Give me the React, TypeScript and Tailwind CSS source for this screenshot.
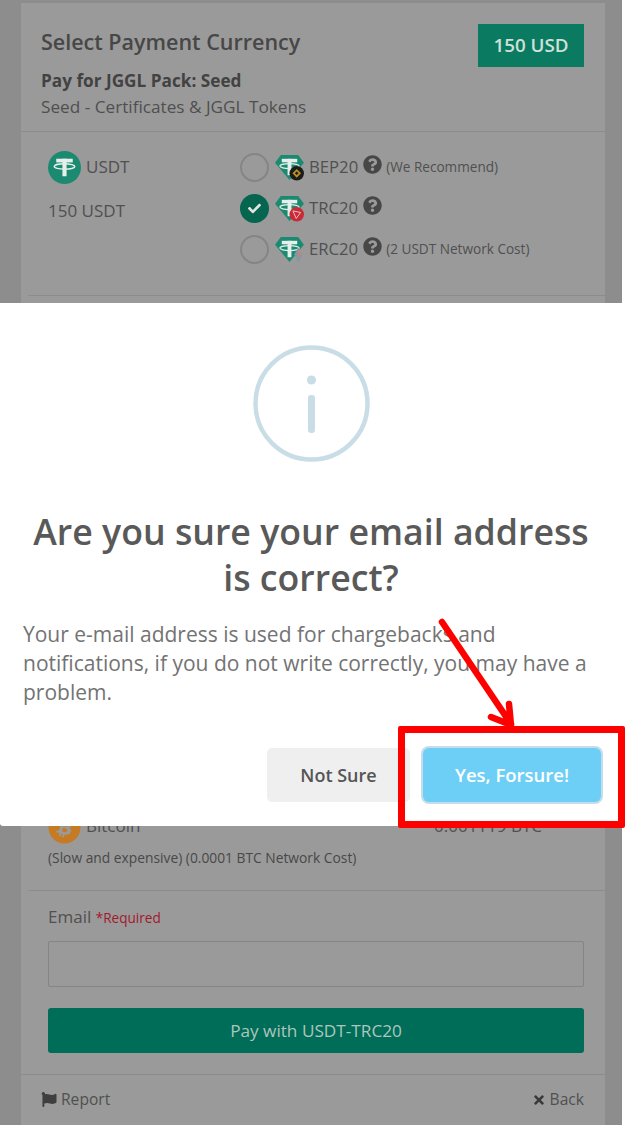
import { FaBitcoin, FaCheck, FaFlag, FaQuestionCircle, FaTimes } from "react-icons/fa";

const font = { fontFamily: '"Open Sans", sans-serif' };

function TetherMark({ color = "#e6efec" }: { color?: string }) {
    return (
        <g fill={color}>
            <rect x="8" y="7.5" width="16" height="3.6" />
            <rect x="14" y="7.5" width="4" height="17" />
            <ellipse cx="16" cy="15" rx="10" ry="2.6" fill="none" stroke={color} strokeWidth="1.3" />
        </g>
    );
}

function TetherCoin() {
    return (
        <svg viewBox="0 0 32 32" className="w-[33px] h-[33px] shrink-0">
            <circle cx="16" cy="16" r="16" fill="#1c8a70" />
            <TetherMark />
        </svg>
    );
}

function NetworkIcon({ network }: { network: "bep" | "trc" | "erc" }) {
    return (
        <svg viewBox="0 0 32 28" className="w-[31px] h-[27px] shrink-0">
            <path d="M7 1h18l6 8-15 18L1 9z" fill="#1c8a70" />
            <g transform="translate(0 -2.5)">
                <TetherMark />
            </g>
            {network === "bep" && (
                <g>
                    <circle cx="23.5" cy="20" r="7.5" fill="#1b1b1b" />
                    <path d="M23.5 15.5l4.5 4.5-4.5 4.5-4.5-4.5zm0 2.6L21.6 20l1.9 1.9 1.9-1.9z" fill="#b98d1f" />
                </g>
            )}
            {network === "trc" && (
                <g>
                    <circle cx="23.5" cy="20" r="7.5" fill="#c92a37" />
                    <path d="M19.5 16.5l8 1.6-4.5 6.2z" fill="none" stroke="#eec4c8" strokeWidth="1" />
                </g>
            )}
            {network === "erc" && (
                <g>
                    <path d="M25 12l4 7-4 8-4-8z" fill="#8d90a8" />
                    <path d="M25 12l4 7-4 2z" fill="#b98b7e" />
                    <path d="M21 19l4 2v6z" fill="#73a596" />
                </g>
            )}
        </svg>
    );
}

function NetworkRow({
    network,
    label,
    note,
    checked,
}: {
    network: "bep" | "trc" | "erc";
    label: string;
    note?: string;
    checked?: boolean;
}) {
    return (
        <div className="flex items-center h-[41px]">
            {checked ? (
                <div className="w-[29px] h-[29px] rounded-full bg-[#05654f] flex items-center justify-center">
                    <FaCheck className="w-[13px] h-[13px] text-[#e4e4e4]" />
                </div>
            ) : (
                <div className="w-[29px] h-[29px] rounded-full border-2 border-[#858585]" />
            )}
            <div className="ml-[5px]">
                <NetworkIcon network={network} />
            </div>
            <span className="ml-[4px] text-[16.7px] text-[#505050] -translate-y-[1px]">{label}</span>
            <FaQuestionCircle className="ml-[5px] w-[19px] h-[19px] text-[#474747] -translate-y-[3px]" />
            {note && <span className="ml-[4px] text-[13.6px] text-[#505050]">{note}</span>}
        </div>
    );
}

function PaymentCard() {
    return (
        <div className="w-[622px] h-[1125px] bg-[#8d8d8d] pt-[3px] pl-[21px]">
            <div className="w-[584px] h-[1122px] bg-[#9a9a9a] text-[#4b4b4b] flex flex-col">
                <div className="h-[129px] border-b border-[#8c8c8c] pl-[20px] pr-[21px] pt-[20px] flex justify-between">
                    <div>
                        <h2 className="text-[21.5px] leading-[38px] font-semibold text-[#474747]">
                            Select Payment Currency
                        </h2>
                        <p className="text-[17.2px] leading-[24px] mt-[8px] font-bold text-[#424242]">
                            Pay for JGGL Pack: Seed
                        </p>
                        <p className="text-[17.2px] leading-[26px] mt-[1px] text-[#4f4f4f]">
                            Seed - Certificates &amp; JGGL Tokens
                        </p>
                    </div>
                    <div className="w-[106px] h-[43px] mt-[1px] bg-[#0a7a60] text-[#cfe0da] text-[18.8px] font-semibold flex items-center justify-center">
                        150 USD
                    </div>
                </div>

                <div className="h-[164px] border-b border-[#8c8c8c] ml-[7px] pl-[20px] pt-[19px] flex">
                    <div className="w-[192px]">
                        <div className="flex items-center gap-[5px]">
                            <TetherCoin />
                            <span className="text-[17px] text-[#505050] -translate-y-[1px]">USDT</span>
                        </div>
                        <div className="text-[17px] mt-[14px] text-[#505050]">150 USDT</div>
                    </div>
                    <div className="-mt-[4px]">
                        <NetworkRow network="bep" label="BEP20" note="(We Recommend)" />
                        <NetworkRow network="trc" label="TRC20" checked />
                        <NetworkRow network="erc" label="ERC20" note="(2 USDT Network Cost)" />
                    </div>
                </div>

                <div className="h-[595px] border-b border-[#8c8c8c] ml-[7px] pl-[20px] pb-[23px] flex flex-col justify-end">
                    <div className="flex items-center justify-between pr-[63px]">
                        <div className="flex items-center gap-[5px]">
                            <FaBitcoin className="w-[33px] h-[33px] text-[#c57a24]" />
                            <span className="text-[17px] text-[#505050] -translate-y-[2px]">Bitcoin</span>
                        </div>
                        <span className="text-[17px] text-[#505050] -translate-y-[2px]">0.001119 BTC</span>
                    </div>
                    <p className="text-[13.8px] leading-[18px] mt-[5px] text-[#484848]">
                        (Slow and expensive) (0.0001 BTC Network Cost)
                    </p>
                </div>

                <div className="h-[184px] border-b border-[#8c8c8c] pl-[27px] pr-[21px] pt-[14px]">
                    <div className="text-[17px] leading-[24px] text-[#505050]">
                        Email <span className="text-[13.6px] text-[#a3182c]">*Required</span>
                    </div>
                    <div className="h-[46px] mt-[11px] border border-[#858585] rounded-[2px]" />
                    <div className="h-[45px] mt-[21px] rounded-[3px] bg-[#006d58] text-[#adc6be] text-[17.2px] flex items-center justify-center">
                        Pay with USDT-TRC20
                    </div>
                </div>

                <div className="flex justify-between items-center pl-[20px] pr-[21px] h-[50px] text-[15.6px] text-[#505050]">
                    <div className="flex items-center gap-[4px]">
                        <FaFlag className="w-[16px] h-[15px] text-[#3f3f3f]" />
                        Report
                    </div>
                    <div className="flex items-center gap-[5px]">
                        <FaTimes className="w-[12px] h-[14px] text-[#3a3a3a]" />
                        Back
                    </div>
                </div>
            </div>
        </div>
    );
}

function ConfirmDialog() {
    return (
        <div className="absolute left-0 top-[303px] w-[622px] h-[523px] bg-white rounded-b-[3px] flex flex-col">
            <svg viewBox="0 0 117 117" className="w-[117px] h-[117px] mt-[42px] mx-auto shrink-0">
                <circle cx="58.5" cy="58.5" r="56" fill="none" stroke="#c9dde6" strokeWidth="4.5" />
                <circle cx="58.5" cy="35" r="4.5" fill="#c9dde6" />
                <rect x="55" y="50" width="7" height="38" rx="3" fill="#c9dde6" />
            </svg>
            <h2 className="mt-[46px] text-center text-[35.7px] leading-[46px] font-semibold text-[#595959] whitespace-nowrap">
                Are you sure your email address
                <br />
                is correct?
            </h2>
            <p className="mt-[20px] ml-[23px] mr-[22px] text-[21px] leading-[29px] text-[#737373]">
                Your e-mail address is used for chargebacks and notifications, if you do not write correctly, you may have
                a problem.
            </p>
            <div className="mt-[41px] flex justify-end gap-[13px] pr-[21px]">
                <button className="w-[143px] h-[54px] rounded-[5px] bg-[#efefef] text-[#555555] text-[18px] font-semibold">
                    Not Sure
                </button>
                <button className="w-[178px] h-[54px] rounded-[6px] bg-[#6dcff6] text-white text-[18.5px] font-semibold ring-[2px] ring-[#c5dcea]">
                    Yes, Forsure!
                </button>
            </div>
        </div>
    );
}

export default function App() {
    return (
        <div className="relative w-[625px] h-[1125px] bg-white overflow-hidden" style={font}>
            <PaymentCard />
            <ConfirmDialog />
            <div className="absolute left-[398px] top-[726px] w-[227px] h-[102px] border-[7px] border-[#ff0000] rounded-[2px]" />
            <svg viewBox="0 0 625 1125" className="absolute inset-0 w-[625px] h-[1125px] pointer-events-none">
                <path
                    d="M442 622L511 724M491 717L511 725L509 704"
                    fill="none"
                    stroke="#ff0000"
                    strokeWidth="6.5"
                    strokeLinecap="round"
                    strokeLinejoin="round"
                />
            </svg>
        </div>
    );
}
